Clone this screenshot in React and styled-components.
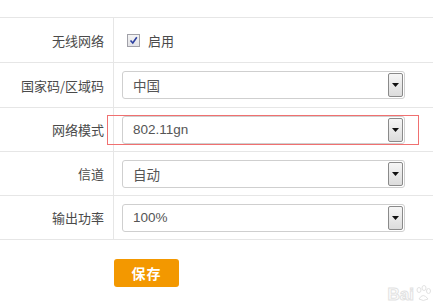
import React from 'react';
import styled, {createGlobalStyle} from 'styled-components';

const GlobalStyle = createGlobalStyle`
    html, body {
        margin: 0;
        padding: 0;
        background: #ffffff;
    }
    body {
        font-family: 'Liberation Sans', 'Noto Sans CJK SC', sans-serif;
        width: 433px;
        height: 303px;
        overflow: hidden;
    }
`;

const Page = styled.div`
    position: relative;
    width: 433px;
    height: 303px;
    padding-top: 17px;
    box-sizing: border-box;
`;

const Table = styled.div`
    border-top: 1px solid #e6e6e6;
`;

const Row = styled.div`
    display: grid;
    grid-template-columns: 114px 1fr;
    height: ${p => (p.$tall ? 45 : 44)}px;
    border-bottom: 1px solid #e6e6e6;
    box-sizing: border-box;
`;

const Label = styled.div`
    display: flex;
    align-items: center;
    justify-content: flex-end;
    padding-right: 9px;
    border-right: 1px solid #e6e6e6;
    font-family: 'Noto Sans CJK SC', sans-serif;
    font-size: 13px;
    color: #4a4a4a;
`;

const Field = styled.div`
    position: relative;
    display: flex;
    align-items: center;
    padding-left: 8px;
`;

const CheckLabel = styled.label`
    display: flex;
    align-items: center;
    gap: 8px;
    padding-left: 5px;
    font-family: 'Noto Sans CJK SC', sans-serif;
    font-size: 13px;
    color: #4a4a4a;
`;

const CheckBox = styled.span`
    width: 11px;
    height: 11px;
    border: 1px solid #a0a0a8;
    background: linear-gradient(#f4f4f4, #e2e2e6);
    display: flex;
    align-items: center;
    justify-content: center;
`;

const Select = styled.div`
    display: flex;
    align-items: center;
    justify-content: space-between;
    width: 283px;
    height: 28px;
    box-sizing: border-box;
    border: 1px solid #cfcfcf;
    border-radius: 3px;
    padding: 1px 1px 1px 10px;
    font-family: 'Liberation Sans', 'Noto Sans CJK SC', sans-serif;
    font-size: 13.5px;
    color: #555;
`;

const Arrow = styled.span`
    width: 15px;
    height: 24px;
    box-sizing: border-box;
    border: 1px solid #8a8a8a;
    border-radius: 2px;
    background: linear-gradient(#f6f6f6, #dcdcdc);
    display: flex;
    align-items: center;
    justify-content: center;
`;

const Highlight = styled.div`
    position: absolute;
    left: -7px;
    top: 7px;
    width: 312px;
    height: 30px;
    box-sizing: border-box;
    border: 1px solid #f07070;
    pointer-events: none;
`;

const Actions = styled.div`
    padding: 19px 0 0 114px;
`;

const SaveButton = styled.button`
    width: 65px;
    height: 28px;
    border: none;
    border-radius: 3px;
    background: #f39800;
    color: #fff;
    font-family: 'Noto Sans CJK SC', sans-serif;
    font-weight: bold;
    font-size: 14px;
    letter-spacing: 1px;
    padding: 0;
`;

const Watermark = styled.div`
    position: absolute;
    right: 2px;
    bottom: 0;
    display: flex;
    align-items: flex-end;
    gap: 1px;
    font-family: 'Liberation Sans', sans-serif;
    font-weight: bold;
    font-size: 17px;
    line-height: 17px;
    color: transparent;
    -webkit-text-stroke: 1px #e2e2e2;
`;

const Tick = () => (
    <svg width="9" height="9" viewBox="0 0 9 9">
        <path d="M1.5 4.5 L3.8 7 L7.8 1.2" fill="none" stroke="#2b3fa0" strokeWidth="1.6" />
    </svg>
);

const Caret = () => (
    <svg width="7" height="4" viewBox="0 0 7 4">
        <path d="M0 0 H7 L3.5 4 Z" fill="#111" />
    </svg>
);

const Paw = () => (
    <svg width="16" height="18" viewBox="0 0 16 18">
        <g fill="none" stroke="#e2e2e2" strokeWidth="1">
            <ellipse cx="4" cy="5" rx="2" ry="2.5" />
            <ellipse cx="9" cy="3" rx="2" ry="2.5" />
            <ellipse cx="13.5" cy="6" rx="2" ry="2.5" />
            <path d="M4 14 Q8 7 13 14 Q8 17 4 14 Z" />
        </g>
    </svg>
);

const Dropdown = ({value}) => (
    <Select>
        <span>{value}</span>
        <Arrow><Caret /></Arrow>
    </Select>
);

const rows = [
    {label: '国家码/区域码', value: '中国', tall: true},
    {label: '网络模式', value: '802.11gn', marked: true},
    {label: '信道', value: '自动'},
    {label: '输出功率', value: '100%'},
];

const App = () => (
    <>
        <GlobalStyle />
        <Page>
            <Table>
                <Row $tall>
                    <Label>无线网络</Label>
                    <Field>
                        <CheckLabel>
                            <CheckBox><Tick /></CheckBox>
                            启用
                        </CheckLabel>
                    </Field>
                </Row>
                {rows.map(r => (
                    <Row key={r.label} $tall={r.tall}>
                        <Label>{r.label}</Label>
                        <Field>
                            <Dropdown value={r.value} />
                            {r.marked && <Highlight />}
                        </Field>
                    </Row>
                ))}
            </Table>
            <Actions>
                <SaveButton>保存</SaveButton>
            </Actions>
            <Watermark>Bai<Paw /></Watermark>
        </Page>
    </>
);

export default App;
